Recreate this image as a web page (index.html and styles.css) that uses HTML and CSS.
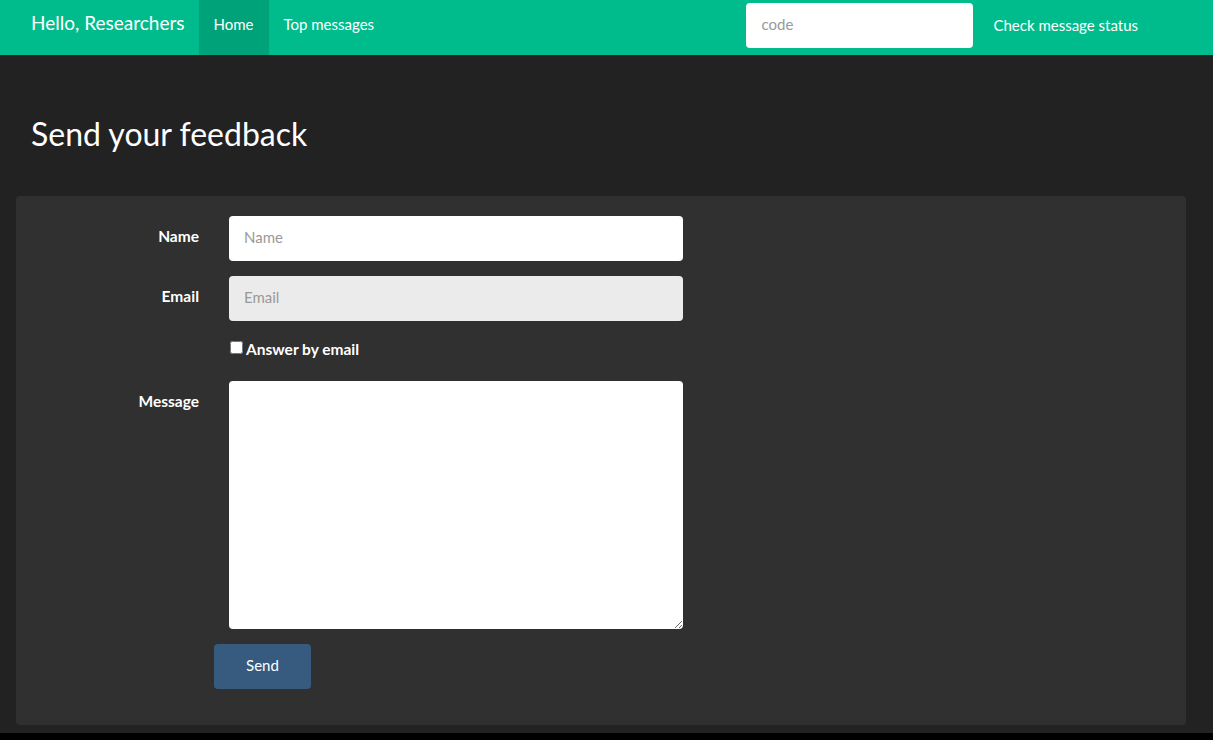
FILE: index.html
```html
<!DOCTYPE html>
<html>
<head>
<meta charset="utf-8">
<link rel="stylesheet" href="styles.css">
</head>
<body>
<div class="page">
  <nav class="navbar">
    <a class="brand" href="#">Hello, Researchers</a>
    <ul class="nav">
      <li><a class="nav-link active" href="#">Home</a></li>
      <li><a class="nav-link" href="#">Top messages</a></li>
    </ul>
    <div class="nav-right">
      <input class="code-input" type="text" placeholder="code">
      <a class="nav-link status" href="#">Check message status</a>
    </div>
  </nav>
  <main class="content">
    <h1 class="title">Send your feedback</h1>
    <div class="well">
      <form class="form">
        <label class="form-label" for="name">Name</label>
        <input class="field" id="name" type="text" placeholder="Name">
        <label class="form-label" for="email">Email</label>
        <input class="field field-disabled" id="email" type="text" placeholder="Email" disabled>
        <div class="check-row">
          <input class="check" id="answer" type="checkbox"><label class="check-label" for="answer">Answer by email</label>
        </div>
        <label class="form-label" for="message">Message</label>
        <textarea class="field textarea" id="message"></textarea>
        <div class="btn-row">
          <button class="btn" type="button">Send</button>
        </div>
      </form>
    </div>
  </main>
</div>
</body>
</html>
```
FILE: styles.css
```css
html {
  background: #000;
}
body {
  margin: 0;
  font-family: Lato, "Open Sans", sans-serif;
  font-size: 15px;
  color: #fff;
}
.page {
  background: #222;
  height: 733px;
}
.navbar {
  display: flex;
  align-items: stretch;
  height: 55px;
  background: #00bc8c;
  padding-left: 16px;
}
.brand {
  display: flex;
  align-items: center;
  padding: 0 14px 11px 15px;
  font-size: 19px;
  color: #fff;
  text-decoration: none;
}
.nav {
  display: flex;
  list-style: none;
  margin: 0;
  padding: 0;
}
.nav li {
  display: flex;
}
.nav-link {
  display: flex;
  align-items: center;
  padding: 0 15px 8px;
  color: #fff;
  text-decoration: none;
  font-size: 15px;
}
.nav-link.active {
  background: #00a379;
}
.nav-right {
  margin-left: auto;
  display: flex;
  align-items: flex-start;
  padding-right: 60px;
}
.code-input {
  margin-top: 3px;
  width: 227px;
  height: 45px;
  box-sizing: border-box;
  border: none;
  border-radius: 4px;
  padding: 0 15px 3px;
  font-family: Lato, sans-serif;
  font-size: 15px;
  background: #fff;
  margin-right: 5px;
}
.code-input::placeholder,
.field::placeholder {
  color: #999;
}
.status {
  height: 49px;
  padding: 0 15px 5px 15px;
}
.content {
  padding: 0 27px 0 16px;
}
.title {
  margin: 0;
  padding: 59px 15px 42px;
  font-size: 32px;
  font-weight: 400;
  line-height: 40px;
}
.well {
  background: #303030;
  border-radius: 4px;
  padding: 20px 0 36px;
}
.form {
  display: grid;
  grid-template-columns: 183px 454px;
  column-gap: 30px;
  row-gap: 15px;
}
.form-label {
  text-align: right;
  font-weight: 700;
  font-size: 15.5px;
  padding-top: 10px;
  line-height: 21px;
}
.field {
  grid-column: 2;
  height: 45px;
  box-sizing: border-box;
  border: none;
  border-radius: 4px;
  padding: 0 15px 3px;
  font-family: Lato, sans-serif;
  font-size: 15px;
  background: #fff;
  margin: 0;
}
.field-disabled {
  background: #ebebeb;
}
.textarea {
  height: 248px;
  padding: 10px 15px;
  resize: vertical;
}
.check-row {
  grid-column: 2;
  display: flex;
  align-items: flex-start;
  height: 30px;
  padding-top: 5px;
  box-sizing: border-box;
}
.check {
  margin: 0 3px 0 1px;
  width: 13px;
  height: 13px;
}
.check-label {
  font-weight: 700;
  font-size: 15.5px;
  line-height: 18px;
  margin-top: -1px;
}
.btn-row {
  grid-column: 2;
  margin-left: -15px;
}
.btn {
  width: 97px;
  height: 45px;
  border: none;
  border-radius: 4px;
  background: #375a7f;
  color: #fff;
  font-family: Lato, sans-serif;
  font-size: 15px;
  padding: 0 0 3px;
}
```
